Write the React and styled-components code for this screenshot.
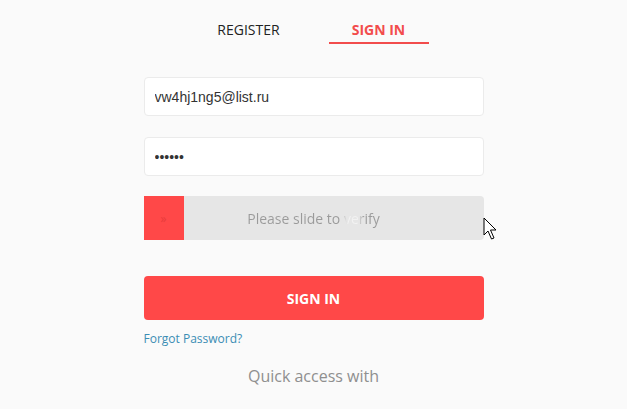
import React from "react";
import styled, { createGlobalStyle } from "styled-components";

const GlobalStyle = createGlobalStyle`
  html, body {
    margin: 0;
    padding: 0;
    background: #fafafa;
    font-family: "Open Sans", "Liberation Sans", sans-serif;
  }
`;

const App = () => {
    const [tab, setTab] = React.useState("signin");

    return (
        <>
            <GlobalStyle />
            <Page>
                <Tabs>
                    <Tab active={tab === "register"} onClick={() => setTab("register")}>
                        REGISTER
                    </Tab>
                    <Tab active={tab === "signin"} onClick={() => setTab("signin")}>
                        SIGN IN
                    </Tab>
                </Tabs>

                <Form onSubmit={(ev) => ev.preventDefault()}>
                    <Input type="text" defaultValue="vw4hj1ng5@list.ru" />
                    <Input type="password" defaultValue="qwerty" last />

                    <Slider>
                        <Handle>&raquo;</Handle>
                        <SliderText>Please slide to verify</SliderText>
                        <Cursor width="16" height="24" viewBox="0 0 16 24">
                            <path
                                d="M1 1 L1 18 L5 14 L8.5 22 L11 21 L7.5 13 L13 13 Z"
                                fill="#fff"
                                stroke="#000"
                                strokeWidth="1"
                                strokeLinejoin="round"
                            />
                        </Cursor>
                    </Slider>

                    <SubmitButton type="submit">SIGN IN</SubmitButton>
                    <ForgotLink href="#">Forgot Password?</ForgotLink>
                </Form>

                <QuickAccess>Quick access with</QuickAccess>
            </Page>
        </>
    );
};

export default App;

const Page = styled.div`
  width: 627px;
  height: 409px;
  display: flex;
  flex-direction: column;
  align-items: center;
  overflow: hidden;
`;

const Tabs = styled.div`
  display: flex;
  gap: 30px;
  margin-top: 20px;
`;

const Tab = styled.div`
  width: 100px;
  text-align: center;
  font-size: 14px;
  line-height: 20px;
  padding-bottom: 2px;
  cursor: pointer;
  font-weight: ${({ active }) => (active ? 700 : 400)};
  color: ${({ active }) => (active ? "#f24c4c" : "#222")};
  border-bottom: 2px solid ${({ active }) => (active ? "#f24c4c" : "transparent")};
`;

const Form = styled.form`
  width: 340px;
  display: flex;
  flex-direction: column;
  margin-top: 33px;
`;

const Input = styled.input`
  box-sizing: border-box;
  height: 39px;
  margin-bottom: ${({ last }) => (last ? "20px" : "21px")};
  padding: 0 10px;
  border: 1px solid #ebebeb;
  border-radius: 4px;
  background: #fff;
  font-family: "Liberation Sans", Arial, sans-serif;
  font-size: 14px;
  color: #333;
  outline: none;
`;

const Slider = styled.div`
  position: relative;
  height: 44px;
  display: flex;
  align-items: center;
  background: #e6e6e6;
  border-radius: 0 4px 4px 0;
  margin-bottom: 36px;
`;

const Handle = styled.div`
  position: absolute;
  left: 0;
  top: 0;
  width: 40px;
  height: 44px;
  display: flex;
  align-items: center;
  justify-content: center;
  background: #ff4848;
  color: #e83b3b;
  font-size: 12px;
`;

const SliderText = styled.span`
  margin: 0 auto;
  font-size: 14px;
  background: linear-gradient(90deg, #9a9a9a 0%, #9a9a9a 70%, #f2f2f2 76%, #f2f2f2 83%, #9a9a9a 88%, #9a9a9a 100%);
  -webkit-background-clip: text;
  background-clip: text;
  color: transparent;
`;

const Cursor = styled.svg`
  position: absolute;
  left: 339px;
  top: 21px;
`;

const SubmitButton = styled.button`
  height: 44px;
  border: none;
  border-radius: 4px;
  background: #ff4848;
  color: #fff;
  font-family: "Open Sans", sans-serif;
  font-weight: 700;
  font-size: 14px;
  cursor: pointer;
`;

const ForgotLink = styled.a`
  margin-top: 10px;
  font-size: 12px;
  color: #3a8db4;
  text-decoration: none;
  align-self: flex-start;
`;

const QuickAccess = styled.div`
  margin-top: 18px;
  font-size: 16px;
  color: #8f8f8f;
`;
